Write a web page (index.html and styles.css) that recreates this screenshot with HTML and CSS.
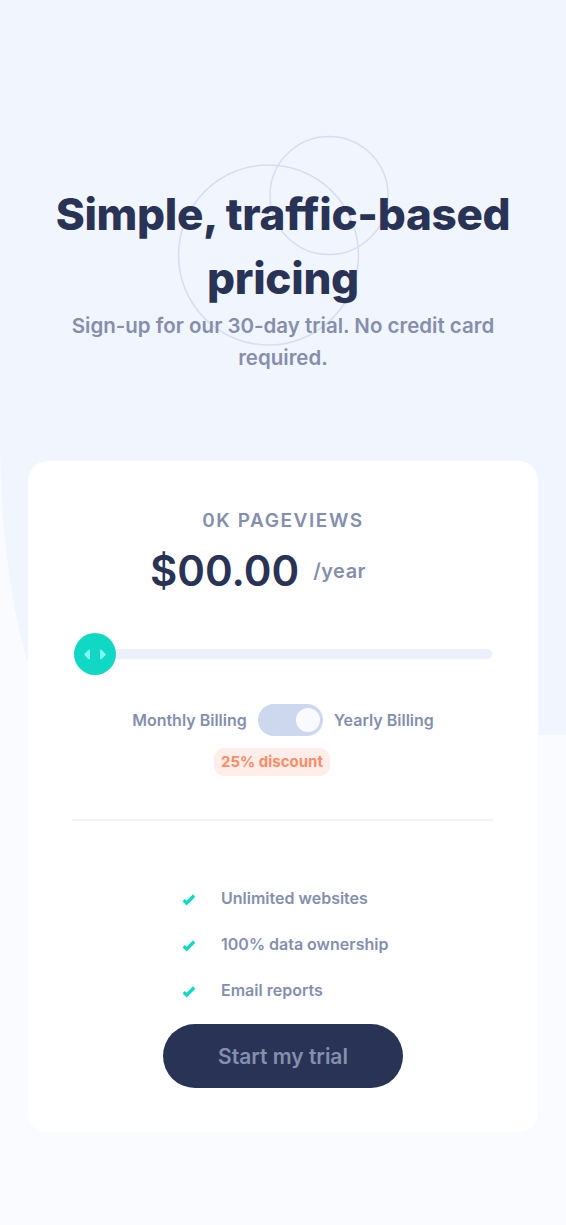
FILE: index.html
```html
<!DOCTYPE html>
<html lang="en">
<head>
<meta charset="utf-8">
<title>Interactive pricing component</title>
<link rel="stylesheet" href="styles.css">
</head>
<body>
<main class="page">
  <div class="bg-shape" aria-hidden="true"></div>
  <svg class="circles" width="230" height="250" viewBox="0 0 230 250" aria-hidden="true">
    <circle cx="98.5" cy="125" r="90" fill="none" stroke="#D6DDF3" stroke-width="1.5"/>
    <circle cx="159" cy="65.5" r="59" fill="none" stroke="#D6DDF3" stroke-width="1.5"/>
  </svg>
  <header class="hero">
    <h1 class="title">Simple, traffic-based pricing</h1>
    <p class="subtitle">Sign-up for our 30-day trial. No credit card required.</p>
  </header>

  <section class="card">
    <p class="views">0K PAGEVIEWS</p>
    <div class="price-row">
      <span class="price">$00.00</span>
      <span class="period">/year</span>
    </div>

    <div class="slider">
      <div class="track"></div>
      <div class="thumb">
        <svg width="22" height="13" viewBox="0 0 22 13"><path fill="#80FFF3" d="M16 2.558v7.884a1 1 0 001.735.679l3.639-3.943a1 1 0 000-1.356l-3.64-3.943A1 1 0 0016 2.558zM6 2.558v7.884a1 1 0 01-1.735.679L.626 7.178a1 1 0 010-1.356l3.64-3.943A1 1 0 016 2.558z"/></svg>
      </div>
    </div>

    <div class="billing">
      <span class="bill-label">Monthly Billing</span>
      <span class="toggle"><span class="knob"></span></span>
      <span class="bill-label">Yearly Billing</span>
    </div>
    <div class="discount-wrap"><span class="discount">25% discount</span></div>

    <hr class="divider">

    <ul class="features">
      <li><svg class="check" width="14" height="12" viewBox="0 0 9 8"><path fill="none" stroke="#10D8C4" stroke-width="2.2" d="M1 4.134l1.907 1.908L7.949 1"/></svg>Unlimited websites</li>
      <li><svg class="check" width="14" height="12" viewBox="0 0 9 8"><path fill="none" stroke="#10D8C4" stroke-width="2.2" d="M1 4.134l1.907 1.908L7.949 1"/></svg>100% data ownership</li>
      <li><svg class="check" width="14" height="12" viewBox="0 0 9 8"><path fill="none" stroke="#10D8C4" stroke-width="2.2" d="M1 4.134l1.907 1.908L7.949 1"/></svg>Email reports</li>
    </ul>
    <div class="cta-wrap"><button class="cta">Start my trial</button></div>
  </section>
</main>
</body>
</html>
```

FILE: styles.css
```css
* { box-sizing: border-box; }
html, body { margin: 0; padding: 0; }
body {
  background: #FAFBFF;
  font-family: "Inter", "Noto Sans", sans-serif;
  color: #858FAD;
}
.page {
  position: relative;
  min-height: 1225px;
  padding: 0 28px 80px;
}
.bg-shape {
  position: absolute;
  top: 0; left: 0; right: 0;
  height: 735px;
  background: #F1F5FE;
  border-bottom-left-radius: 80px 300px;
  z-index: 0;
}
.circles {
  position: absolute;
  left: 170px;
  top: 130px;
  z-index: 0;
}
.hero {
  position: relative;
  z-index: 1;
  padding-top: 182px;
  text-align: center;
}
.title {
  margin: 0 auto;
  max-width: 480px;
  font-size: 44px;
  line-height: 64px;
  font-weight: 800;
  color: #293356;
  letter-spacing: -0.3px;
}
.subtitle {
  margin: 0 auto;
  max-width: 480px;
  font-size: 20.5px;
  line-height: 32px;
  font-weight: 600;
}
.card {
  position: relative;
  z-index: 1;
  margin-top: 87px;
  background: #FFFFFF;
  border-radius: 20px;
  padding: 48px 44px 44px;
}
.views {
  margin: 0;
  text-align: center;
  font-size: 19px;
  font-weight: 600;
  letter-spacing: 1.6px;
  line-height: 24px;
}
.price-row {
  display: flex;
  justify-content: center;
  align-items: center;
  gap: 14px;
  margin-top: 13px;
  padding-right: 50px;
}
.price {
  font-size: 42px;
  font-weight: 600;
  color: #293356;
  line-height: 50px;
}
.period {
  font-size: 20px;
  font-weight: 600;
  letter-spacing: 0.5px;
}
.slider {
  position: relative;
  margin-top: 37px;
  height: 42px;
  display: flex;
  align-items: center;
}
.track {
  flex: 1;
  height: 10px;
  border-radius: 5px;
  background: #ECF0FB;
  margin-left: 8px;
  margin-right: 2px;
}
.thumb {
  position: absolute;
  left: 2px;
  top: 0;
  width: 42px;
  height: 42px;
  border-radius: 50%;
  background: #10D8C4;
  display: flex;
  align-items: center;
  justify-content: center;
}
.billing {
  display: flex;
  justify-content: center;
  align-items: center;
  gap: 11px;
  margin-top: 29px;
}
.bill-label {
  font-size: 16px;
  font-weight: 600;
}
.toggle {
  width: 65px;
  height: 32px;
  border-radius: 16px;
  background: #CDD7EE;
  display: flex;
  align-items: center;
  justify-content: flex-end;
  padding-right: 3px;
}
.knob {
  width: 24px;
  height: 24px;
  border-radius: 50%;
  background: #F8FAFF;
}
.discount-wrap {
  display: flex;
  justify-content: center;
  margin-top: 12px;
  padding-right: 22px;
}
.discount {
  background: #FEEDE8;
  color: #FF8C66;
  font-size: 15px;
  font-weight: 700;
  border-radius: 10px;
  padding: 4px 7px;
  line-height: 20px;
}
.divider {
  border: 0;
  height: 2px;
  background: #F0F3FC;
  margin: 43px 0 0;
}
.features {
  list-style: none;
  margin: 67px 0 0;
  padding: 0 0 0 110px;
  display: flex;
  flex-direction: column;
  gap: 26px;
}
.features li {
  display: flex;
  align-items: center;
  gap: 25px;
  font-size: 16px;
  font-weight: 600;
  line-height: 20px;
}
.check { flex: none; margin-top: 4px; }
.cta-wrap {
  display: flex;
  justify-content: center;
  margin-top: 24px;
}
.cta {
  width: 240px;
  height: 64px;
  border: 0;
  border-radius: 32px;
  background: #293356;
  color: #858FAD;
  font-family: inherit;
  font-size: 21px;
  font-weight: 600;
}
```
